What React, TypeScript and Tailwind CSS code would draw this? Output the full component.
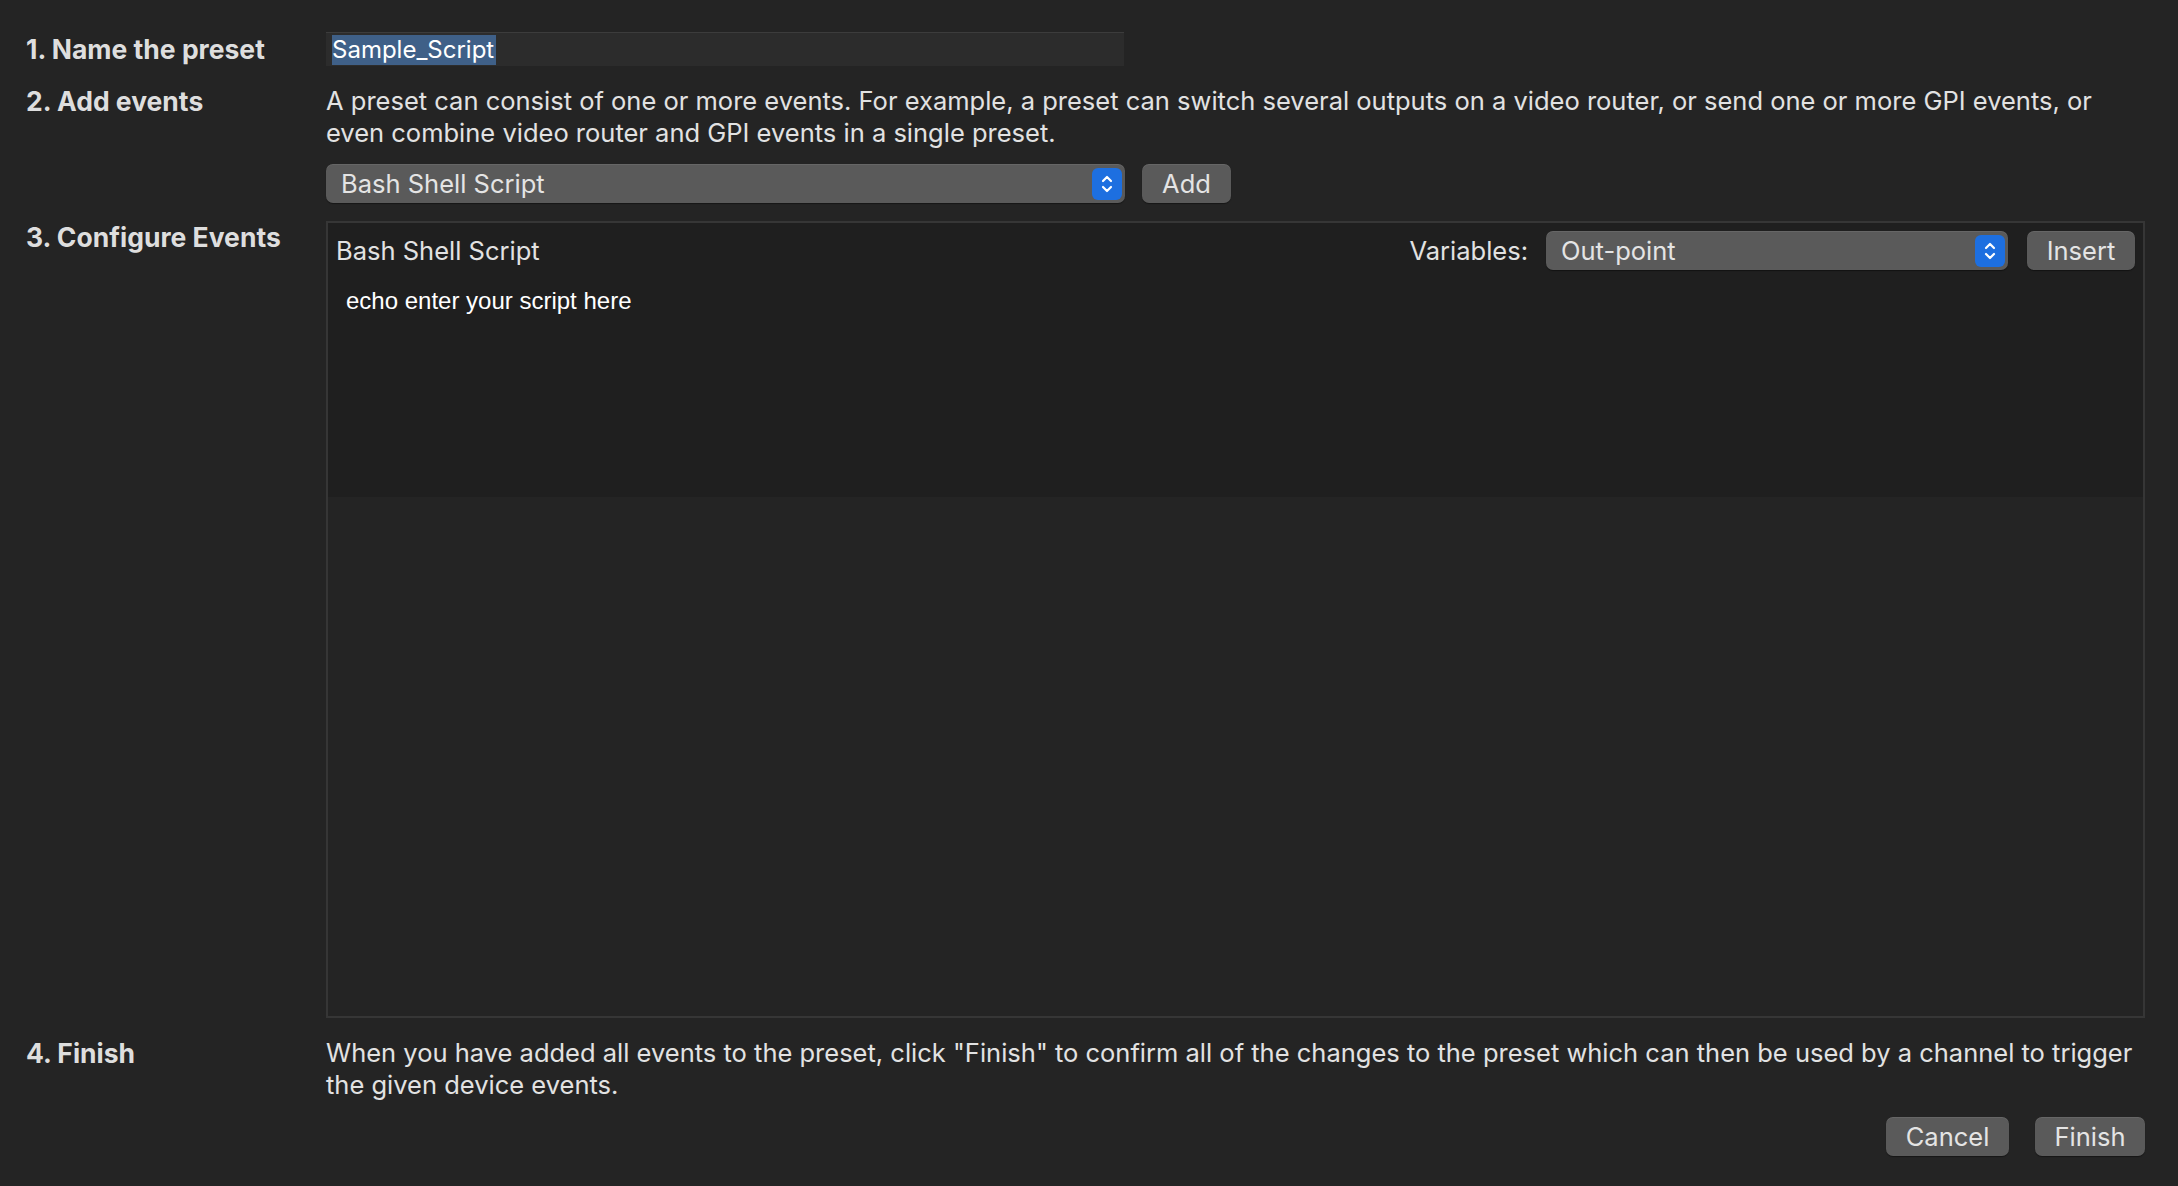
import React from 'react';

function Stepper() {
  return (
    <div className="flex h-[32px] w-[30px] items-center justify-center rounded-[6px] bg-[#1d6fe0]">
      <svg width="14" height="22" viewBox="0 0 14 22" fill="none" stroke="white" strokeWidth="2.2" strokeLinecap="round" strokeLinejoin="round">
        <path d="M3 8 L7 4 L11 8" />
        <path d="M3 14 L7 18 L11 14" />
      </svg>
    </div>
  );
}

function Select({ value, className }: { value: string; className: string }) {
  return (
    <div
      className={
        'flex h-[39px] items-center justify-between rounded-[7px] bg-[#5a5a5a] pl-[15px] pr-[3px] shadow-[inset_0_1px_0_rgba(255,255,255,0.08),0_1px_1px_rgba(0,0,0,0.4)] ' +
        className
      }
    >
      <span className="text-[25.5px] leading-[32px] text-[#e4e4e4]">{value}</span>
      <Stepper />
    </div>
  );
}

function Button({ label, className }: { label: string; className: string }) {
  return (
    <div
      className={
        'flex h-[39px] items-center justify-center rounded-[7px] bg-[#5a5a5a] text-[25.5px] leading-[32px] text-[#e4e4e4] shadow-[inset_0_1px_0_rgba(255,255,255,0.08),0_1px_1px_rgba(0,0,0,0.4)] ' +
        className
      }
    >
      {label}
    </div>
  );
}

function Label({ children }: { children: React.ReactNode }) {
  return <div className="w-[300px] shrink-0 text-[26.5px] font-bold leading-[32px] text-[#dedede]">{children}</div>;
}

export default function App() {
  return (
    <div className="flex h-[1186px] w-full flex-col bg-[#242424] pl-[26px] pr-[33px] font-['Inter',sans-serif] text-[#e2e2e2]">
      {/* 1 */}
      <div className="mt-[32px] flex h-[34px] items-center">
        <Label>1. Name the preset</Label>
        <div className="flex h-[34px] w-[798px] items-center border-t border-[#3c3c3c] bg-[#2c2c2c] px-[6px]">
          <span className="bg-[#3f6088] pr-[2px] text-[24px] leading-[30px] text-white">Sample_Script</span>
        </div>
      </div>

      {/* 2 */}
      <div className="mt-[19px] flex">
        <Label>2. Add events</Label>
        <div className="flex flex-1 flex-col">
          <p className="text-[25.5px] leading-[32px] text-[#e2e2e2]">
            A preset can consist of one or more events. For example, a preset can switch several outputs on a video router, or send one or more GPI events, or even combine video router and GPI events in a single preset.
          </p>
          <div className="mt-[15px] flex gap-[17px]">
            <Select value="Bash Shell Script" className="w-[799px]" />
            <Button label="Add" className="w-[89px]" />
          </div>
        </div>
      </div>

      {/* 3 */}
      <div className="mt-[18px] flex">
        <Label>3. Configure Events</Label>
        <div className="flex h-[797px] flex-1 flex-col border-2 border-[#363636]">
          <div className="flex h-[274px] flex-col bg-[#1f1f1f]">
            <div className="flex items-center pl-[8px] pr-[8px] pt-[8px]">
              <span className="flex-1 text-[25.5px] leading-[32px] text-[#e2e2e2]">Bash Shell Script</span>
              <span className="mr-[18px] text-[25.5px] leading-[32px] text-[#e2e2e2]">Variables:</span>
              <Select value="Out-point" className="w-[462px]" />
              <Button label="Insert" className="ml-[19px] w-[108px]" />
            </div>
            <div className="pl-[18px] pt-[16px] font-['Liberation_Sans',Arial,sans-serif] text-[24px] leading-[30px] text-white">
              echo enter your script here
            </div>
          </div>
        </div>
      </div>

      {/* 4 */}
      <div className="mt-[19px] flex">
        <Label>4. Finish</Label>
        <div className="flex flex-1 flex-col">
          <p className="text-[25.5px] leading-[32px] text-[#e2e2e2]">
            When you have added all events to the preset, click "Finish" to confirm all of the changes to the preset which can then be used by a channel to trigger the given device events.
          </p>
          <div className="mt-[16px] flex justify-end gap-[26px]">
            <Button label="Cancel" className="w-[123px]" />
            <Button label="Finish" className="w-[110px]" />
          </div>
        </div>
      </div>
    </div>
  );
}
